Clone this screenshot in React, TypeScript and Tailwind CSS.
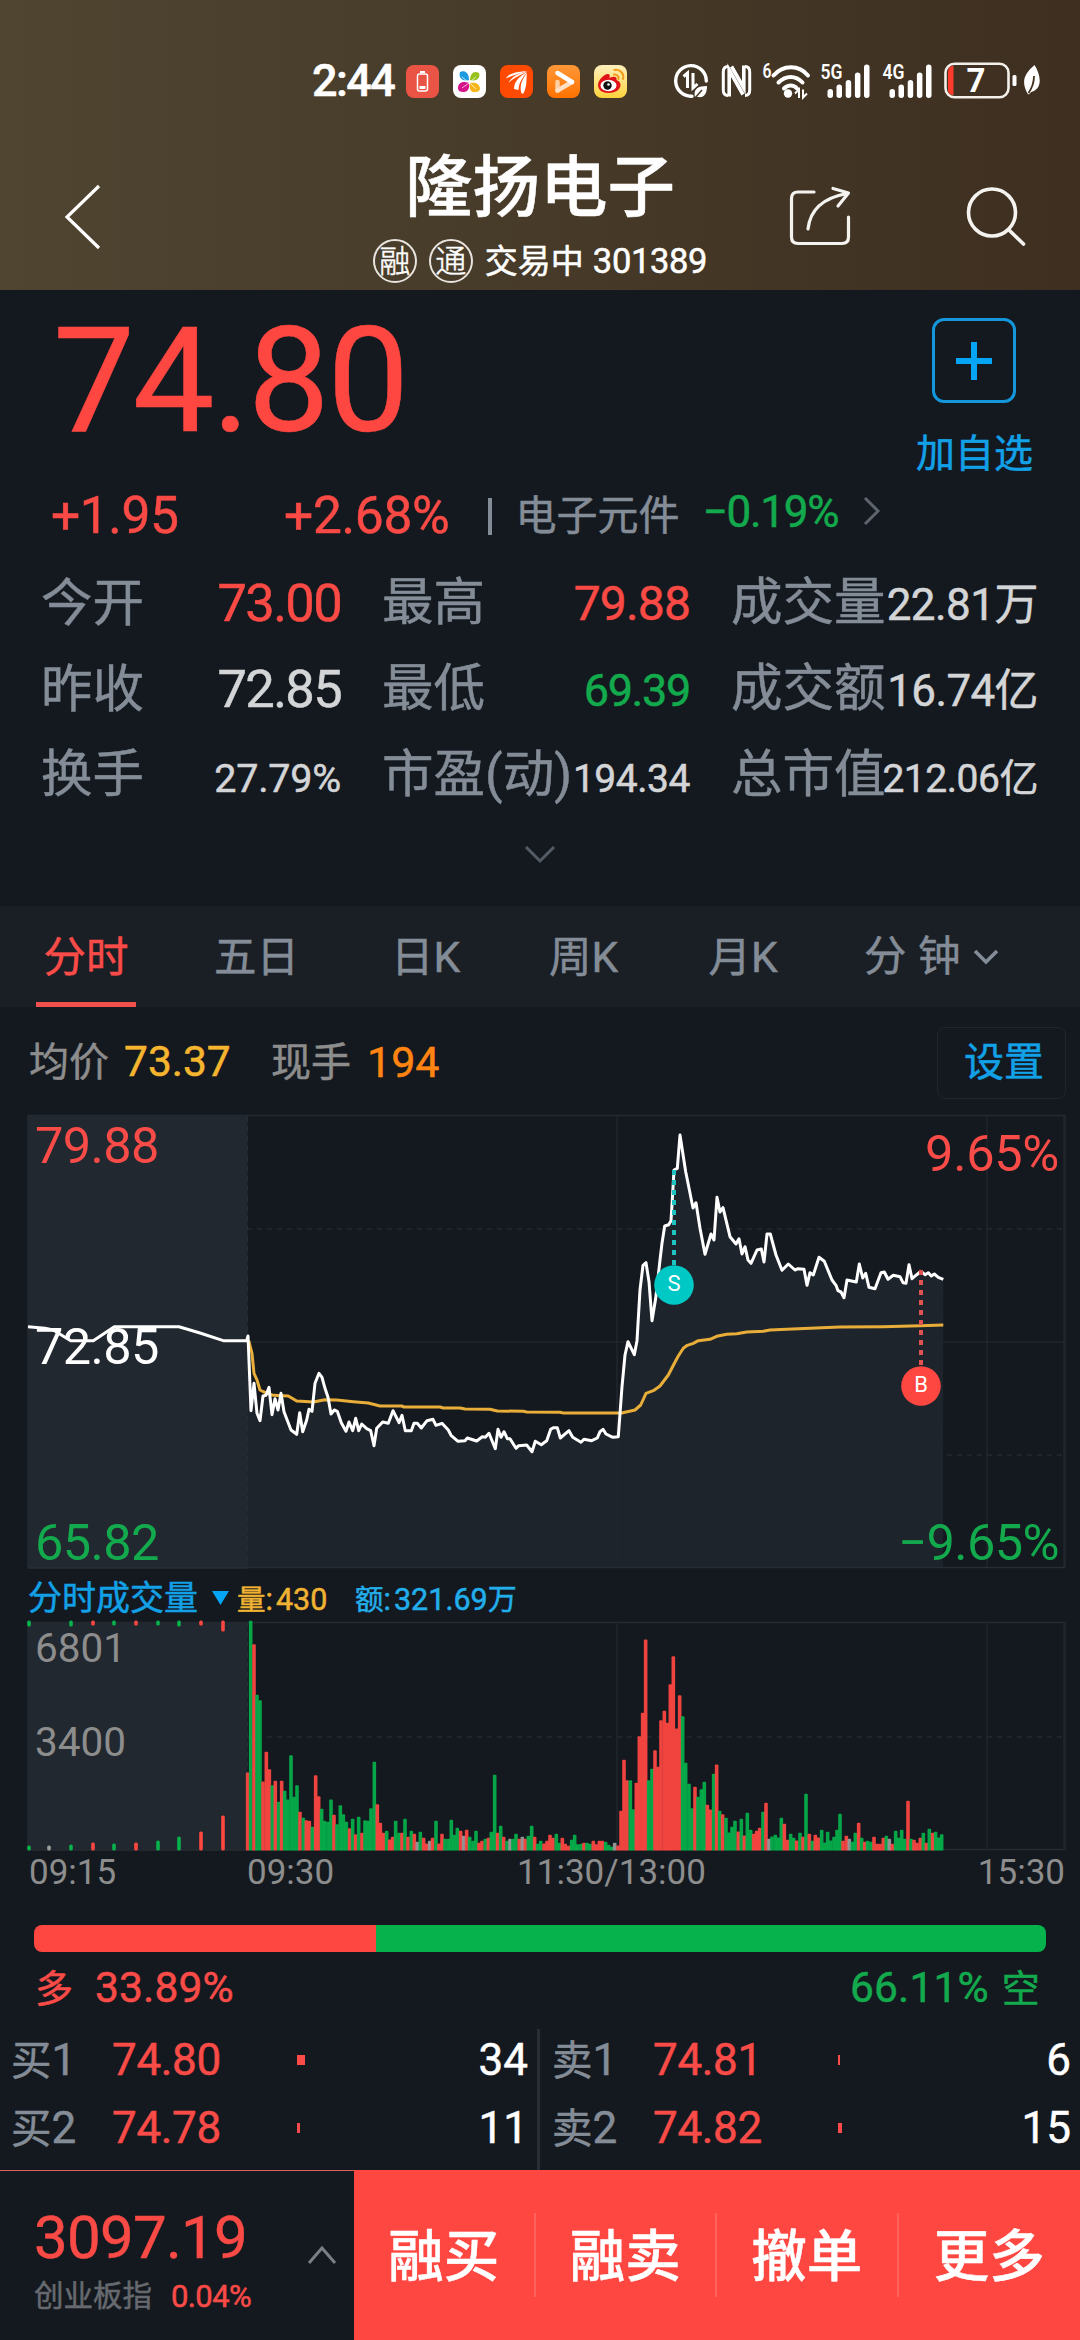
import React from 'react';

const RED = '#ff4742';
const GREEN = '#05b24b';
const GREY = '#9c9c9c';

/* Turns "x,y x,y" pairs stored at triple resolution into page-space points. */
function scalePoints(ox: number, oy: number, src: string): string[] {
  return src
    .trim()
    .split(/\s+/)
    .map((p) => {
      const [x, y] = p.split(',').map(Number);
      return `${(ox + x / 3).toFixed(1)},${(oy + y / 3).toFixed(1)}`;
    });
}

const priceLine = [
  ...scalePoints(0, 1100, '84,680 135,685 160,690 212,722 280,722 343,680 537,680 600,699 670,722 740,722 744,708 753,932 762,850 771,940 780,962 789,888 798,886 807,862 816,944 825,896 834,930 843,880 852,935 873,990 890,1003 899,938 908,995 920,960 927,928 936,934 945,850 957,820 966,832 975,865 984,892 993,942 1003,930 1012,934 1024,968 1038,994 1047,966 1058,992 1067,955 1076,992 1085,972 1100,986 1112,992 1122,1037 1130,985 1148,966 1165,970'),
  ...scalePoints(380, 1380, '39,92 57,128 66,106 76,152 94,152 102,130 112,130 124,144 141,122 159,118 168,136 186,130 205,150 213,166 234,184 255,182 262,174 290,183 307,170 316,172 327,160 346,206 354,148 363,172 372,155 382,176 390,176 408,205 416,197 440,195 456,215 466,184 484,194 500,182 512,148 520,143 532,143 541,174 567,152 578,172 603,187 612,178 635,182 652,174 660,155 669,148 678,162 694,170'),
  ...scalePoints(600, 1100, '40,1012 55,1010 66,860 75,765 84,725 103,764 111,722 120,570 129,496 138,488 147,545 156,662 167,595 180,480 186,430 194,378 206,374 213,362 217,300 222,210 232,205 240,105 257,215 279,324 288,308 300,385 315,463 333,402 342,420 351,292 360,336 369,323 390,410 408,432 417,416 426,462 435,440 444,480 453,490 471,450 484,447 492,486 501,402 511,402 528,465 546,511 565,492 585,510 594,506 612,508 621,556 630,518 640,525 657,472 673,484 696,540 708,556 714,572 723,576 732,593 741,540 769,546 778,492 788,534 797,520 807,562 825,566 843,518 853,516 864,538 880,526 900,530 909,548 918,550 927,494 936,536 950,524 963,514 975,524 985,518 994,528 1003,522 1015,532 1030,538'),
];

const averageLine = [
  ...scalePoints(0, 1100, '746,722 756,760 762,820 771,840 780,870 792,876 820,886 865,888 890,903 940,906 975,899 1010,900 1060,905 1105,909 1140,918'),
  ...scalePoints(380, 1380, '0,78 65,78 72,81 180,81 190,84 240,84 255,87 330,88 352,93 430,94 440,96 540,97 550,99 715,99'),
  ...scalePoints(600, 1100, '65,939 105,930 122,915 138,880 160,872 180,858 205,825 222,792 235,768 250,745 262,736 280,730 295,722 330,718 350,709 380,703 410,701 440,696 490,694 510,690 560,688 630,685 720,681 850,680 960,677 1030,675'),
];

type Bar = { c: string; h: number };

/* Volume bars: colour letter followed by the bar's top, measured against a base line. */
function bars(base: number, src: string): Bar[] {
  return src
    .trim()
    .split(/\s+/)
    .map((t) => ({
      c: t[0] === 'r' ? RED : t[0] === 'g' ? GREEN : GREY,
      h: (base - Number(t.slice(1))) / 3,
    }));
}

const volume = [
  ...bars(871, 'r637 g182 r252 g404 g420 r664 r575 r627 g675 r662 g725 r662 g692 g718 g585 g710 g675 r755 g773 r780 r782 g800 r645 r708 g746 g782 g785 g718 r764 g792 g735 g762 g785 r804 g776 r822 g770 r818 g780 g782 g744 g605 r732 r788 r818 g812 r838 r830'),
  ...bars(1411, 'g1322 g1358 r1358 g1316 r1370 g1352 r1361 w1385 g1355 r1373 r1390 w1382 r1373 g1322 r1390 r1361 g1376 g1376 g1319 g1364 g1343 r1352 w1367 r1349 g1370 g1382 g1352 r1388 r1382 g1376 r1373 g1355 g1184 r1358 g1337 r1370 g1382 w1376 g1376 g1361 r1376 w1370 r1376 g1367 g1337 r1370 g1391 g1382 r1390 r1382 r1364 r1373 g1361 g1388 r1373 r1391 r1397 g1379 g1364 g1392 g1391 r1388 g1388 g1391 r1382 r1392 r1382 r1382 g1385 g1394 g1400 w1388 r1396'),
  ...bars(751, 'r632 r479 r540 g540 g627 r548 r408 r338 r118 g540 g506 r450 r500 r360 r332 r368 r252 r168 r385 r285 g348 g488 g551 g624 r560 g590 g567 g545 r614 r628 g521 r493 g632 r642 g653 g697 g680 g662 r694 g656 r706 g638 g689 r701 r692 r683 g635 r608 w716 g709 g704 g712 g653 r671 r719 g701 g713 r721 g698 r710 g581 r701 g722 r704 r712 g689 g727 g695 g721 g710 g689 g641 r722 r707 w716 g725 g698 r668 g713 r725 g722 g725 r710 r731 r731 r713 g707 w716 r731 g692 g713 g689 g716 r602 g716 r719 r728 r713 g698 r728 g686 r698 g695 g712 g702'),
];

const auction = [
  { x: 29, h: 5, t: 6, c: GREEN },
  { x: 49, h: 5, t: 0, c: GREY },
  { x: 71, h: 6, t: 6, c: GREEN },
  { x: 93, h: 8, t: 5, c: RED },
  { x: 114, h: 7, t: 5, c: GREEN },
  { x: 136, h: 8, t: 5, c: RED },
  { x: 158, h: 10, t: 5, c: GREEN },
  { x: 179, h: 14, t: 6, c: GREEN },
  { x: 201, h: 19, t: 5, c: RED },
  { x: 223, h: 35, t: 11, c: RED },
];

function AppIcons() {
  return (
    <div className="flex gap-[14px]">
      <svg width="33" height="33" viewBox="0 0 33 33">
        <rect width="33" height="33" rx="8" fill="#ea5444" />
        <rect x="11.5" y="9" width="10" height="17" rx="2" fill="none" stroke="#fff" strokeWidth="1.5" />
        <path d="M14 7h5" stroke="#fff" strokeWidth="2" />
        <rect x="13.5" y="21" width="6" height="3" fill="#fff" />
      </svg>
      <svg width="33" height="33" viewBox="0 0 33 33">
        <rect width="33" height="33" rx="8" fill="#fff" />
        <path d="M7 7c4-2 9 0 9 8c-6 2-11-2-9-8z" fill="#1d9be0" />
        <path d="M26 8c-5-3-9 1-9 7c6 2 11-2 9-7z" fill="#97c11f" />
        <path d="M5 23c0-6 6-7 11-5c1 6-2 9-5 9c-4 0-6-1-6-4z" fill="#d6138b" />
        <path d="M27 23c-1-5-5-6-10-5c-1 6 1 10 5 9c3 0 5-1 5-4z" fill="#f7b51c" />
        <path d="M9 12l6 5M23 12l-6 5M9 23l7-5M23 24l-6-6" stroke="#fff" strokeWidth=".7" />
      </svg>
      <svg width="33" height="33" viewBox="0 0 33 33">
        <rect width="33" height="33" rx="8" fill="#ff4a04" />
        <path d="M6 13.500C9 8 16 7 27 6C19 9 13 10 6 13.500z" fill="#fff" />
        <path d="M8.500 18C11 12 19 8 27 6.500C20 10.500 14 12.500 8.500 18zM14 24C14 16 20 11 27 7C23 13 19 16 18.500 25zM21.500 28.500C19 20 22.500 14 27 8C26 15 27.500 20 23.500 28.500z" fill="#fff" />
      </svg>
      <svg width="33" height="33" viewBox="0 0 33 33">
        <defs>
          <linearGradient id="play" x1="0" y1="0" x2="0" y2="1">
            <stop stopColor="#ff9838" />
            <stop offset="1" stopColor="#ff7200" />
          </linearGradient>
        </defs>
        <rect width="33" height="33" rx="8" fill="url(#play)" />
        <path d="M10.500 25.500V17" stroke="#ffd0a0" strokeWidth="4.500" strokeLinecap="round" />
        <path d="M10.500 25.500L25 17" stroke="#ffe0c4" strokeWidth="4.500" strokeLinecap="round" />
        <path d="M10.500 8L25 17" stroke="#fff" strokeWidth="4.500" strokeLinecap="round" />
      </svg>
      <svg width="33" height="33" viewBox="0 0 33 33">
        <defs>
          <linearGradient id="wb" x1="0" y1="0" x2="0" y2="1">
            <stop stopColor="#fff0bd" />
            <stop offset="1" stopColor="#fdd33b" />
          </linearGradient>
        </defs>
        <rect width="33" height="33" rx="8" fill="url(#wb)" />
        <path d="M4 20c0-5 6-11 10-11c2 0 2 2 1.500 4c4-2 8-1.500 7 2c3 1 4 3 4 5c0 5-6 8-12 8S4 25 4 20z" fill="#e11218" />
        <ellipse cx="14.500" cy="20.500" rx="8" ry="5.800" fill="#fff" />
        <circle cx="13.500" cy="20.500" r="4.200" fill="#111" />
        <circle cx="14.500" cy="19.500" r="1.300" fill="#fff" />
        <path d="M20 9.500c3-.5 5 2 4.500 4.500M20.500 5c6-1 10 4 8.500 9" fill="none" stroke="#f49b1d" strokeWidth="2" strokeLinecap="round" />
      </svg>
    </div>
  );
}

function Signal({ label }: { label: string }) {
  return (
    <svg className="mt-[-8px]" width="51" height="46" viewBox="0 -8 51 46" fill="#fff">
      <text x="0.500" y="17" fontSize="21" fontWeight="600" textLength="22" lengthAdjust="spacingAndGlyphs">{label}</text>
      <rect x="7.500" y="27" width="5.500" height="9" rx="2.700" />
      <rect x="16.500" y="22.500" width="5.500" height="13.500" rx="2.700" />
      <rect x="25.700" y="18" width="5.500" height="18" rx="2.700" />
      <rect x="34.900" y="10.500" width="5.500" height="25.500" rx="2.700" />
      <rect x="44" y="2.500" width="5.500" height="33.500" rx="2.700" />
    </svg>
  );
}

function StatusIcons() {
  return (
    <div className="flex items-center">
      <svg width="35" height="38" viewBox="0 0 35 38" fill="none" stroke="#fff">
        <path d="M18 34.200A15.300 15.300 0 1 1 32.300 19" strokeWidth="3.400" strokeLinecap="round" />
        <path d="M9.500 14.500L13.500 11v15M19 11v15l4.500-4" strokeWidth="3" />
        <path d="M21 35c-2-8 3-11 12-11c0 8-3 12-9 11z" fill="#fff" stroke="none" />
        <path d="M21 36l7-8" stroke="#443828" strokeWidth="1.500" />
      </svg>
      <svg className="ml-[12px]" width="31" height="38" viewBox="0 0 31 38" fill="none" stroke="#fff">
        <path d="M7 4.500Q2.300 4.500 2.300 10v18q0 5.500 4.700 5.500M24 33.500q4.700 0 4.700-5.500V10q0-5.500-4.700-5.500" strokeWidth="3" />
        <path d="M8.200 34.500V8L22 32.500" strokeWidth="3.600" />
        <path d="M22.800 3.500V26L10.500 4.500" strokeWidth="3.600" />
      </svg>
      <svg className="mt-[-8px] ml-[10px]" width="49" height="46" viewBox="0 -8 49 46" fill="none" stroke="#fff">
        <text x="0.500" y="16" fontSize="20" fontWeight="600" fill="#fff" stroke="none" textLength="9" lengthAdjust="spacingAndGlyphs">6</text>
        <path d="M11.500 13.500C21 2.500 37 2.500 46 13.500" strokeWidth="4" strokeLinecap="round" />
        <path d="M16.500 20.500c7.500-7.500 17-7.500 24 0" strokeWidth="4" strokeLinecap="round" />
        <path d="M22 26.500c4-4 9.500-4 13 0" strokeWidth="4" strokeLinecap="round" />
        <circle cx="26" cy="31.500" r="4.200" fill="#fff" stroke="none" />
        <path d="M33 31.500l4-4v8.500M41 27.500v8l4-4" strokeWidth="2" />
      </svg>
      <div className="ml-[9px]"><Signal label="5G" /></div>
      <div className="ml-[11px]"><Signal label="4G" /></div>
      <svg className="ml-[11px]" width="98" height="38" viewBox="0 0 98 38">
        <rect x="1.500" y="1.700" width="63" height="33.500" rx="9" fill="none" stroke="#f3efe9" strokeWidth="2.600" />
        <path d="M9.500 4v29H9q-5 0-5-6V10q0-6 5-6z" fill="#ff3b2b" />
        <text x="32" y="30" fontSize="33" fontWeight="700" fill="#fff" textAnchor="middle">7</text>
        <rect x="68.500" y="13" width="4" height="11" rx="1.500" fill="#fff" />
        <path d="M90.500 3c6 9 8 22-.5 26c-2 .8-3.500 1-5 3.500l-1.500-1C77 20 80 12 90.500 3z" fill="#fff" />
        <path d="M90 14c0 7-2 12-5.500 17" stroke="#40321f" strokeWidth="1.800" fill="none" />
      </svg>
    </div>
  );
}

function Header() {
  return (
    <header className="h-[290px] bg-gradient-to-r from-[#4f4531] to-[#3e2f20] text-white">
      <div className="flex h-[101px] items-end">
        <div className="flex h-[40px] items-center pl-[312px]">
          <div className="w-[94px] text-[45px] leading-[40px] font-medium tracking-[-0.035em]">2:44</div>
          <AppIcons />
          <div className="ml-[47px]"><StatusIcons /></div>
        </div>
      </div>
      <div className="flex items-start">
        <svg className="mt-[82px] ml-[62px]" width="40" height="68" viewBox="0 0 40 68" fill="none" stroke="#fff" strokeWidth="3.200">
          <path d="M37 3L5 34L37 65" />
        </svg>
        <div className="ml-[271px] flex w-[334px] flex-col items-center whitespace-nowrap">
          <h1 className="mt-[53px] text-[67.500px] leading-[67px] font-medium">隆扬电子</h1>
          <div className="mt-[18px] flex h-[44px] items-center">
            <span className="flex size-[44px] items-center justify-center rounded-full border-2 border-[#e8e4dd] text-[31px] leading-none font-light">融</span>
            <span className="ml-[12px] flex size-[44px] items-center justify-center rounded-full border-2 border-[#e8e4dd] text-[31px] leading-none font-light">通</span>
            <span className="ml-[12px] text-[33px] leading-none">交易中</span>
            <span className="ml-[9px] text-[34.500px] leading-none tracking-[-0.01em]">301389</span>
          </div>
        </div>
        <svg className="mt-[84px] ml-[81px]" width="64" height="64" viewBox="0 0 64 64" fill="none" stroke="#f5f3ef" strokeWidth="3.200" strokeLinecap="round" strokeLinejoin="round">
          <path d="M26 7H10Q3.500 7 3.500 13.500V52Q3.500 58.500 10 58.500H54Q60.500 58.500 60.500 52V32" />
          <path d="M20 44C22 26 34 13 59 8.500M45 3.500L60.500 8L50 21" />
        </svg>
        <svg className="mt-[84px] ml-[113px]" width="64" height="64" viewBox="0 0 64 64" fill="none" stroke="#f5f3ef" strokeWidth="3.600" strokeLinecap="round">
          <circle cx="27" cy="27.500" r="23.500" />
          <path d="M44 45L58.500 59" />
        </svg>
      </div>
    </header>
  );
}

function Stat({ label, value, look }: { label: string; value: string; look: string }) {
  return (
    <div className="flex h-[86px] items-baseline justify-between leading-[86px] whitespace-nowrap">
      <span className="w-0 text-[51.500px] text-[#848d97]">{label}</span>
      <span className={look}>{value}</span>
    </div>
  );
}

function Quote() {
  return (
    <section className="h-[616px]">
      <div className="flex h-[195px] items-start justify-between pr-[47px] pl-[53px]">
        <div className="mt-[19px] text-[146px] leading-none tracking-[-0.018em] text-[#ff4742]">74.80</div>
        <div className="mt-[28px] flex flex-col items-center text-[#12a0e6]">
          <div className="flex h-[85px] w-[84px] items-center justify-center rounded-[12px] border-[3px] border-[#1397da]">
            <svg width="36" height="38" viewBox="0 0 36 38"><path d="M18 0v38M0 19h36" stroke="#06a4f4" strokeWidth="6" /></svg>
          </div>
          <div className="mt-[32px] text-[39px] leading-none">加自选</div>
        </div>
      </div>
      <div className="flex h-[62px] items-center pl-[51px] leading-none whitespace-nowrap">
        <span className="w-[233px] text-[51.500px] tracking-[-0.008em] text-[#fa4a45]">+1.95</span>
        <span className="w-[204px] text-[51.500px] tracking-[-0.006em] text-[#fa4a45]">+2.68%</span>
        <span className="h-[37px] w-[3.500px] bg-[#848d97]" />
        <span className="ml-[24px] w-[187px] text-[41px] text-[#848d97]">电子元件</span>
        <span className="mb-[8px] w-[160px] text-[44px] tracking-[-0.028em] text-[#13aa4d]">−0.19%</span>
        <svg className="mb-[10px]" width="18" height="30" viewBox="0 0 18 30" fill="none" stroke="#5d646d" strokeWidth="3"><path d="M2 2L15 15L2 28" /></svg>
      </div>
      <div className="mt-[13px] ml-[41px] grid w-[997px] grid-cols-[300px_308px_307px] justify-between">
        <Stat label="今开" value="73.00" look="text-[52.500px] tracking-[-0.032em] text-[#fa4a45]" />
        <Stat label="最高" value="79.88" look="text-[48px] tracking-[-0.018em] text-[#fa4a45]" />
        <Stat label="成交量" value="22.81万" look="text-[44px] tracking-[-0.012em] text-[#d4d5d7]" />
        <Stat label="昨收" value="72.85" look="text-[52.500px] tracking-[-0.032em] text-[#d4d5d7]" />
        <Stat label="最低" value="69.39" look="text-[45px] tracking-[-0.03em] text-[#13aa4d]" />
        <Stat label="成交额" value="16.74亿" look="text-[44px] tracking-[-0.014em] text-[#d4d5d7]" />
        <Stat label="换手" value="27.79%" look="text-[39.500px] tracking-[-0.006em] text-[#d4d5d7]" />
        <Stat label="市盈(动)" value="194.34" look="text-[39px] tracking-[-0.012em] text-[#d4d5d7]" />
        <Stat label="总市值" value="212.06亿" look="text-[39px] tracking-[-0.012em] text-[#d4d5d7]" />
      </div>
      <svg className="mx-auto mt-[27px]" width="32" height="20" viewBox="0 0 32 20" fill="none" stroke="#535b65" strokeWidth="3"><path d="M2 2L16 16L30 2" /></svg>
    </section>
  );
}

function Tabs() {
  return (
    <nav className="flex h-[101px] bg-[#1a1f26] pl-[36px] text-[42.500px] leading-[104px] whitespace-nowrap text-[#848d97]">
      <div className="w-[100px] border-b-[5px] border-[#f0504c] text-center text-[#f94b47]">分时</div>
      <div className="w-[241px] text-center">五日</div>
      <div className="w-[97px] text-center">日K</div>
      <div className="w-[219px] text-center">周K</div>
      <div className="w-[100px] text-center">月K</div>
      <div className="ml-[71px] flex items-center">
        <span className="[word-spacing:1px]">分 钟</span>
        <svg className="ml-[12px]" width="26" height="16" viewBox="0 0 26 16" fill="none" stroke="#848d97" strokeWidth="3.500"><path d="M2 2L13 13L24 2" /></svg>
      </div>
    </nav>
  );
}

function ChartInfo() {
  return (
    <div className="flex h-[100px] items-center pr-[14px] pl-[29px] leading-none whitespace-nowrap">
      <div className="flex flex-1 items-center pt-[11px]">
        <span className="text-[40px] text-[#8d8d8d]">均价</span>
        <span className="ml-[15px] w-[147px] text-[42.500px] text-[#f5b52f]">73.37</span>
        <span className="text-[40px] text-[#8d8d8d]">现手</span>
        <span className="ml-[16px] text-[43px] text-[#ff8412]">194</span>
      </div>
      <button className="mt-[12px] h-[72px] w-[129px] rounded-lg border border-[#20262d] pl-[5px] text-[40px] text-[#12a0e6]">设置</button>
    </div>
  );
}

function Grid({ top, mid, bottom }: { top: number; mid: number[]; bottom: number }) {
  return (
    <g stroke="#20262d" strokeWidth="1.500" fill="none">
      <path d={`M28 ${top}H1065V${bottom}H28z`} stroke="#242a31" />
      <path d={`M617 ${top}V${bottom}M987 ${top}V${bottom}M1064 ${top}V${bottom}`} />
      {mid.map((y) => (
        <path key={y} d={`M247 ${y}H1065`} strokeDasharray="5 5" stroke="#232930" />
      ))}
    </g>
  );
}

function PriceChart() {
  return (
    <svg className="block" width="1080" height="468" viewBox="0 1107 1080 468" fill="none">
      <Grid top={1115.5} mid={[1229, 1455]} bottom={1567.5} />
      <path d="M247 1342H1065" stroke="#20262d" strokeWidth="1.500" />
      <polygon points={`${priceLine.join(' ')} 943,1567 28,1567`} fill="#1f262c" fillOpacity=".93" />
      <rect x="28" y="1116" width="219.500" height="453" fill="#22282f" />
      <path d="M247.500 1116V1567" stroke="#272d34" strokeDasharray="5 5" />
      <path d="M28 1567.500H1065" stroke="#272d34" />
      <polyline points={averageLine.join(' ')} stroke="#e9ae3a" strokeWidth="3" strokeLinejoin="round" />
      <polyline points={priceLine.join(' ')} stroke="#fff" strokeWidth="3" strokeLinejoin="round" />
      <path d="M674 1170V1265" stroke="#1fc4c2" strokeWidth="4" strokeDasharray="5 5" />
      <circle cx="674" cy="1285" r="19.800" fill="#00c8c4" />
      <text x="674" y="1291" fontSize="22" fill="#fff" textAnchor="middle">S</text>
      <path d="M921 1270V1367" stroke="#e0524f" strokeWidth="4" strokeDasharray="5 5" />
      <circle cx="921" cy="1386" r="19.800" fill="#ff4742" />
      <text x="921" y="1392" fontSize="22" fill="#fff" textAnchor="middle">B</text>
      <g fontSize="50.500" letterSpacing="-0.600">
        <text x="35" y="1163" fill="#f94b47">79.88</text>
        <text x="35" y="1364" fill="#fff">72.85</text>
        <text x="35" y="1560" fill="#13aa4d">65.82</text>
        <text x="1059" y="1170.500" fill="#f94b47" textAnchor="end" letterSpacing="-0.300">9.65%</text>
        <text x="1059" y="1560" fill="#13aa4d" textAnchor="end">−9.65%</text>
      </g>
    </svg>
  );
}

function VolumeHeader() {
  return (
    <div className="flex h-[45px] items-center pl-[28px] leading-none whitespace-nowrap">
      <span className="w-[184px] pt-px text-[34px] text-[#12a0e6]">分时成交量</span>
      <svg width="17" height="14" viewBox="0 0 17 14"><path d="M0 0H17L8.500 14z" fill="#06a4f4" /></svg>
      <span className="ml-[8px] w-[118px] pt-[5px] text-[30.500px] text-[#f0b232]"><span className="text-[28.500px]">量</span><span className="tracking-[0.1em]">:</span>430</span>
      <span className="pt-[5px] text-[30.500px] text-[#22aeea]"><span className="text-[28.500px]">额</span><span className="tracking-[0.1em]">:</span>321.69<span className="text-[29px]">万</span></span>
    </div>
  );
}

function VolumeChart() {
  return (
    <svg className="block" width="1080" height="272" viewBox="0 1620 1080 272" fill="none">
      <Grid top={1622.5} mid={[1737]} bottom={1849.5} />
      <rect x="28" y="1622" width="219.500" height="229" fill="#22282f" />
      <path d="M247.500 1622V1850" stroke="#272d34" strokeDasharray="5 5" />
      {auction.map((b) => (
        <g key={b.x} fill={b.c}>
          <rect x={b.x - 1.8} y={1850.500 - b.h} width="3.600" height={b.h} rx="1.500" />
          {b.t > 0 && <rect x={b.x - 1.8} y="1620.500" width="3.600" height={b.t} rx="1.500" />}
        </g>
      ))}
      {volume.map((b, i) => (
        <path
          key={i}
          d={`M${Math.round((247.7 + i * 3.085) * 3) / 3 - 1.8} 1850.500v${-b.h + 1}q0-1 1-1h1.600q1 0 1 1v${b.h - 1}z`}
          fill={b.c}
          fillOpacity=".93"
        />
      ))}
      <g fill="#8d8d8d">
        <g fontSize="40.500">
          <text x="35" y="1662">6801</text>
          <text x="35" y="1756">3400</text>
        </g>
        <g fontSize="35">
          <text x="29" y="1884">09:15</text>
          <text x="247" y="1884">09:30</text>
          <text x="611.500" y="1884" textAnchor="middle">11:30/13:00</text>
          <text x="1065" y="1884" textAnchor="end">15:30</text>
        </g>
      </g>
    </svg>
  );
}

function Ratio() {
  return (
    <section className="h-[128px] px-[34px] pt-[33px] leading-none">
      <div className="flex h-[27px] overflow-hidden rounded-[8px]">
        <div className="w-[342px] bg-[#ff4742]" />
        <div className="flex-1 bg-[#05b24b]" />
      </div>
      <div className="flex h-[68px] items-center justify-between pt-[5px] text-[42.500px] tracking-[0.004em]">
        <div className="flex items-center text-[#f94b47]"><span className="w-[61px] pl-px text-[38px]">多</span>33.89%</div>
        <div className="flex items-center pr-[6px] text-[#13aa4d]">66.11%<span className="ml-[13px] text-[38px]">空</span></div>
      </div>
    </section>
  );
}

function Level({ side, n, price, bar, amount }: { side: string; n: string; price: string; bar: string; amount: string }) {
  return (
    <div className="flex h-[68px] items-center text-[44px] leading-none">
      <div className="w-[101px] text-[#848d97]"><span className="text-[40.500px]">{side}</span>{n}</div>
      <div className="w-[185px] tracking-[-0.008em] text-[#f94b47]">{price}</div>
      <div className={`${bar} h-[10px] bg-[#f94b47]`} />
      <div className="flex-1 text-right text-white">{amount}</div>
    </div>
  );
}

function OrderBook() {
  return (
    <section className="mt-[9px] flex h-[141px]">
      <div className="w-[540px] border-r-[3px] border-[#292e36] pr-[9px] pl-[11px]">
        <div className="-mt-[3px]">
          <Level side="买" n="1" price="74.80" bar="w-[8px]" amount="34" />
          <Level side="买" n="2" price="74.78" bar="w-[3px]" amount="11" />
        </div>
      </div>
      <div className="flex-1 pr-[9px] pl-[12px]">
        <div className="-mt-[3px]">
          <Level side="卖" n="1" price="74.81" bar="w-[2px]" amount="6" />
          <Level side="卖" n="2" price="74.82" bar="w-[4px]" amount="15" />
        </div>
      </div>
    </section>
  );
}

function BottomBar() {
  return (
    <footer className="flex h-[170px] border-t border-[#e0605c] bg-[#14191f]">
      <div className="flex w-[354px] items-start pl-[34px]">
        <div className="w-[273px] leading-none whitespace-nowrap">
          <div className="mt-[37px] text-[60px] tracking-[-0.012em] text-[#fa4a45]">3097.19</div>
          <div className="mt-[13px] flex items-center">
            <span className="w-[137px] text-[29.500px] text-[#666a6f]">创业板指</span>
            <span className="text-[31px] tracking-[-0.02em] text-[#f94b47]">0.04%</span>
          </div>
        </div>
        <svg className="mt-[73px]" width="30" height="22" viewBox="0 0 30 22" fill="none" stroke="#7b7f84" strokeWidth="3"><path d="M2 19L15 4L28 19" /></svg>
      </div>
      <div className="-mt-px flex flex-1 items-center bg-[#ff4742] text-[55.500px] font-medium text-white">
        {['融买', '融卖', '撤单', '更多'].map((t, i) => (
          <div
            key={t}
            className={`flex h-[84px] w-[181.500px] items-center justify-center ${i < 3 ? 'border-r-2 border-[#ff625c]' : ''}`}
          >
            <span className="pt-[6px] leading-none">{t}</span>
          </div>
        ))}
      </div>
    </footer>
  );
}

export default function App() {
  return (
    <main className="h-[2340px] w-[1080px] overflow-hidden bg-[#14191f] font-['Roboto','Noto_Sans_CJK_SC',sans-serif] [-webkit-text-stroke:0.5px]">
      <Header />
      <Quote />
      <Tabs />
      <ChartInfo />
      <PriceChart />
      <VolumeHeader />
      <VolumeChart />
      <Ratio />
      <OrderBook />
      <BottomBar />
    </main>
  );
}
